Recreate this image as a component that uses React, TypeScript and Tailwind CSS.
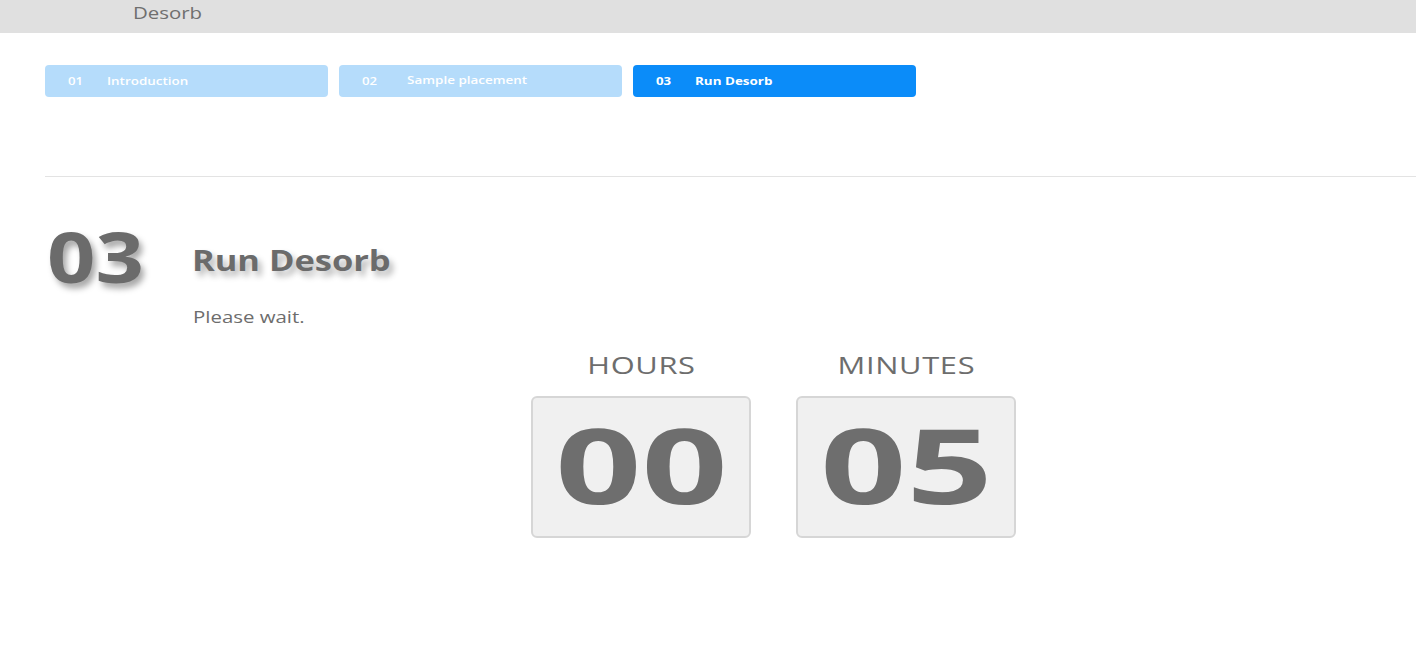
import React from "react";

const steps = [
  { n: "01", label: "Introduction", active: false, extra: "" },
  { n: "02", label: "Sample placement", active: false, extra: "pl-[5px] -translate-y-px" },
  { n: "03", label: "Run Desorb", active: true, extra: "" },
];

function TimerBox({ label, value }: { label: string; value: string }) {
  return (
    <div className="flex flex-col items-center">
      <div className="h-[32px] text-[23px] leading-[32px] text-[#6d6d6d]">
        <span className="inline-block scale-x-[1.34] tracking-[0.5px]">{label}</span>
      </div>
      <div className="mt-[15.5px] flex h-[142px] w-[220px] items-center justify-center rounded-[6px] border-2 border-[#d6d6d6] bg-[#f0f0f0] pb-[6px]">
        <span className="inline-block scale-x-[1.45] text-[104px] font-bold leading-none text-[#6e6e6e]">
          {value}
        </span>
      </div>
    </div>
  );
}

export default function App() {
  return (
    <div className="min-h-[665px] bg-white font-['Open_Sans',sans-serif] text-[#6d6d6d]">
      <header className="h-[33px] bg-[#e0e0e0] pl-[133px] pt-[1px]">
        <span className="inline-block origin-left scale-x-[1.2] text-[17px] leading-[24px] text-[#6f6f6f]">
          Desorb
        </span>
      </header>

      <main className="pl-[45px] pt-[32px]">
        <nav className="flex gap-[11px]">
          {steps.map((s) => (
            <div
              key={s.n}
              className={`flex h-[32px] w-[283px] items-center rounded-[4px] pl-[23px] text-[11px] text-white ${
                s.active ? "bg-[#0b8cf9] font-bold" : "bg-[#b5dcfb] font-semibold"
              }`}
            >
              <span className="inline-block w-[39px] origin-left scale-x-[1.2]">{s.n}</span>
              <span className={`inline-block origin-left scale-x-[1.22] ${s.extra}`}>{s.label}</span>
            </div>
          ))}
        </nav>

        <div className="mt-[79px] h-px bg-[#e3e3e3]" />

        <section className="mt-[44px] flex">
          <div className="w-[147px] shrink-0">
            <span className="inline-block origin-left translate-x-[2px] scale-x-[1.21] text-[70px] font-bold leading-[70px] text-[#6b6b6b] [text-shadow:3px_5px_6px_rgba(0,0,0,0.35)]">
              03
            </span>
          </div>
          <div className="flex-1 pr-[61px]">
            <h1 className="mt-[25px] h-[28px] text-[28px] font-bold leading-[28px] text-[#6b6b6b]">
              <span className="inline-block origin-left scale-x-[1.23] [text-shadow:3px_5px_6px_rgba(0,0,0,0.3)]">
                Run Desorb
              </span>
            </h1>
            <p className="mt-[30.5px] h-[24px] pl-px text-[17px] leading-[24px] text-[#6d6d6d]">
              <span className="inline-block origin-left scale-x-[1.2]">Please wait.</span>
            </p>
            <div className="mt-[20px] flex justify-center gap-[45px]">
              <TimerBox label="HOURS" value="00" />
              <TimerBox label="MINUTES" value="05" />
            </div>
          </div>
        </section>
      </main>
    </div>
  );
}
